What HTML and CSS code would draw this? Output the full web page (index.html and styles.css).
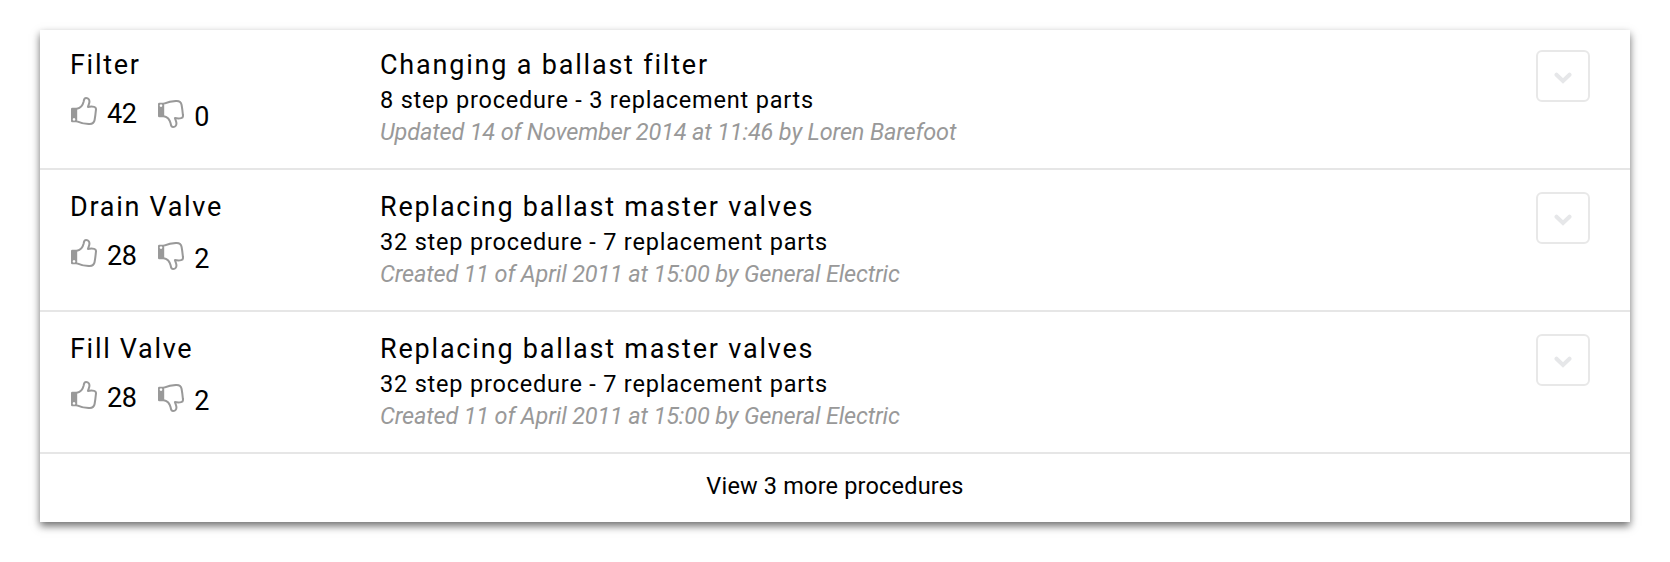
FILE: index.html
```html
<!DOCTYPE html>
<html lang="en">
<head>
<meta charset="utf-8">
<title>Procedures</title>
<link rel="stylesheet" href="styles.css">
</head>
<body>
<svg class="defs" width="0" height="0" aria-hidden="true">
  <symbol id="thumb" viewBox="0 0 26 28">
    <path fill="#999" fill-rule="evenodd" d="M1.2 10.8H6.2V25.2H1.2Q0 25.2 0 24V12Q0 10.8 1.2 10.8ZM3 21.1a1.3 1.3 0 1 0 .01 0Z"/>
    <path fill="none" stroke="#999" stroke-width="2" stroke-linejoin="round" d="M6 11.8C9.5 11 11.9 7.700 12.600 4.800C12.900 3.200 12.800 1 15.100 1C17.600 1 18.600 3 18.400 5.200C18.200 7.200 17.300 8.500 16.900 9.900C19 9.600 21.500 9.500 23.200 9.900C24.900 10.300 25.200 11.600 24.900 13.200C24.600 16.300 24.200 19.800 23.600 23C23.100 25.900 21.600 26.900 18.700 27C14.300 27.100 10.300 26.200 6 24.300"/>
  </symbol>
</svg>
<main class="card">
  <section class="row">
    <div class="part">
      <h2 class="title">Filter</h2>
      <div class="votes">
        <span class="vote up"><svg class="thumb"><use href="#thumb"/></svg><span class="count">42</span></span>
        <span class="vote down"><svg class="thumb"><use href="#thumb"/></svg><span class="count">0</span></span>
      </div>
    </div>
    <div class="info">
      <h2 class="title">Changing a ballast filter</h2>
      <p class="summary">8 step procedure - 3 replacement parts</p>
      <p class="meta">Updated 14 of November 2014 at 11:46 by Loren Barefoot</p>
    </div>
    <button class="toggle" aria-label="Expand"><svg width="18" height="12" viewBox="0 0 18 12"><path d="M2.500 2.700L9 9L15.500 2.700"/></svg></button>
  </section>
  <section class="row">
    <div class="part">
      <h2 class="title">Drain Valve</h2>
      <div class="votes">
        <span class="vote up"><svg class="thumb"><use href="#thumb"/></svg><span class="count">28</span></span>
        <span class="vote down"><svg class="thumb"><use href="#thumb"/></svg><span class="count">2</span></span>
      </div>
    </div>
    <div class="info">
      <h2 class="title">Replacing ballast master valves</h2>
      <p class="summary">32 step procedure - 7 replacement parts</p>
      <p class="meta">Created 11 of April 2011 at 15:00 by General Electric</p>
    </div>
    <button class="toggle" aria-label="Expand"><svg width="18" height="12" viewBox="0 0 18 12"><path d="M2.500 2.700L9 9L15.500 2.700"/></svg></button>
  </section>
  <section class="row">
    <div class="part">
      <h2 class="title">Fill Valve</h2>
      <div class="votes">
        <span class="vote up"><svg class="thumb"><use href="#thumb"/></svg><span class="count">28</span></span>
        <span class="vote down"><svg class="thumb"><use href="#thumb"/></svg><span class="count">2</span></span>
      </div>
    </div>
    <div class="info">
      <h2 class="title">Replacing ballast master valves</h2>
      <p class="summary">32 step procedure - 7 replacement parts</p>
      <p class="meta">Created 11 of April 2011 at 15:00 by General Electric</p>
    </div>
    <button class="toggle" aria-label="Expand"><svg width="18" height="12" viewBox="0 0 18 12"><path d="M2.500 2.700L9 9L15.500 2.700"/></svg></button>
  </section>
  <a class="more">View 3 more procedures</a>
</main>
</body>
</html>
```
FILE: styles.css
```css
* { box-sizing: border-box; }

body {
  margin: 0;
  padding: 30px 40px;
  background: #fff;
  color: #000;
  font-family: Roboto, "Open Sans", sans-serif;
}

.defs { display: block; }

.card {
  height: 492px;
  background: #fff;
  box-shadow: 0 4px 8px rgba(0, 0, 0, .57);
}

.row {
  display: flex;
  align-items: flex-start;
  height: 142px;
  padding: 19px 40px 0 30px;
  border-bottom: 2px solid #e6e6e6;
}

.row:first-child {
  height: 140px;
  padding-top: 17px;
}

.part { width: 310px; }
.info { flex: 1; }

.title {
  margin: 0;
  font-size: 27px;
  font-weight: 400;
  line-height: 36px;
  letter-spacing: 1.8px;
}

.part .title { letter-spacing: 1.7px; }

.votes {
  display: flex;
  gap: 22px;
  padding: 14px 0 0 1px;
}

.vote {
  display: flex;
  align-items: flex-start;
}

.down { padding-top: 3px; }

.thumb {
  width: 26px;
  height: 28px;
}

.down .thumb { transform: scaleY(-1); }

.count {
  padding-left: 10px;
  font-size: 27px;
  line-height: 34px;
  letter-spacing: -.5px;
}

.summary,
.meta {
  margin: 0;
  font-size: 23.5px;
}

.summary {
  line-height: 34px;
  letter-spacing: .8px;
}

.meta {
  line-height: 30px;
  font-style: italic;
  letter-spacing: -.16px;
  color: #999;
}

.toggle {
  display: flex;
  align-items: center;
  justify-content: center;
  width: 54px;
  height: 52px;
  margin-top: 3px;
  padding: 3px 0 0;
  border: 2px solid #e8e8e8;
  border-radius: 6px;
  background: #fff;
}

.toggle path {
  fill: none;
  stroke: #e6e7e9;
  stroke-width: 4;
  stroke-linecap: round;
}

.more {
  display: block;
  padding-top: 15px;
  font-size: 23.5px;
  line-height: 34px;
  letter-spacing: .18px;
  text-align: center;
}
```
